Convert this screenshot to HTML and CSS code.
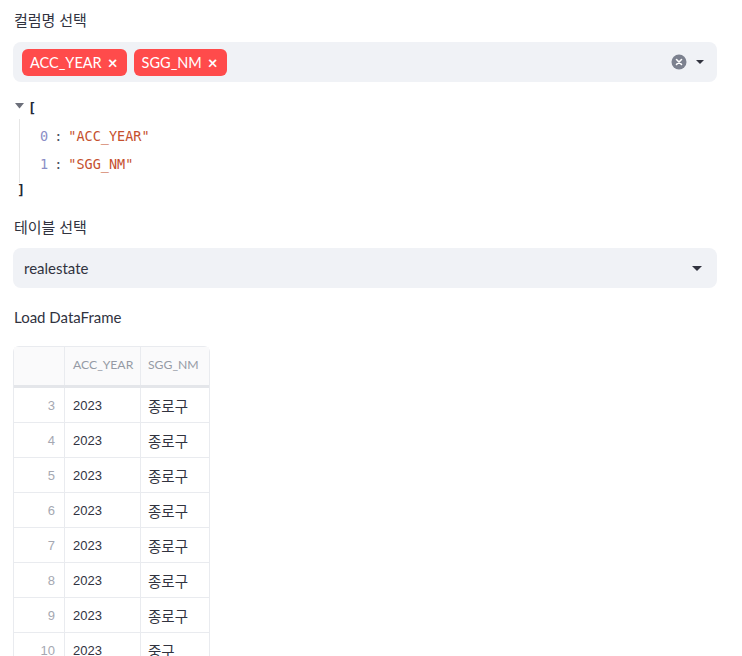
FILE: index.html
```html
<!DOCTYPE html>
<html>
<head>
<meta charset="utf-8">
<link rel="stylesheet" href="styles.css">
</head>
<body>
<div class="app">
  <div class="label">컬럼명 선택</div>
  <div class="select multi">
    <div class="tags">
      <span class="tag">ACC_YEAR <span class="x">×</span></span>
      <span class="tag">SGG_NM <span class="x">×</span></span>
    </div>
    <div class="controls">
      <svg class="clear" width="16" height="16" viewBox="0 0 16 16"><circle cx="8" cy="8" r="7.5" fill="#7c818f"/><path d="M5.5 5.5 L10.5 10.5 M10.5 5.5 L5.5 10.5" stroke="#fff" stroke-width="1.6" stroke-linecap="round"/></svg>
      <svg class="caret" width="10" height="6" viewBox="0 0 10 6"><path d="M1 1 L9 1 L5 5 Z" fill="#31333f"/></svg>
    </div>
  </div>

  <div class="json">
    <div class="jline"><svg class="tri" width="11" height="8" viewBox="0 0 11 8"><path d="M1 1 L10 1 L5.5 6.5 Z" fill="#6c6f7a"/></svg><span class="br">[</span></div>
    <div class="jbody">
      <div class="jitem"><span class="idx">0</span><span class="colon">:</span><span class="str">"ACC_YEAR"</span></div>
      <div class="jitem"><span class="idx">1</span><span class="colon">:</span><span class="str">"SGG_NM"</span></div>
    </div>
    <div class="jend">]</div>
  </div>

  <div class="label l2">테이블 선택</div>
  <div class="select single">
    <span class="value">realestate</span>
    <svg class="caret" width="12" height="7" viewBox="0 0 12 7"><path d="M1 1 L11 1 L6 6 Z" fill="#31333f"/></svg>
  </div>

  <div class="label l3">Load DataFrame</div>

  <div class="grid">
    <div class="row head">
      <div class="c idx"></div>
      <div class="c y">ACC_YEAR</div>
      <div class="c n">SGG_NM</div>
    </div>
    <div class="row"><div class="c idx">3</div><div class="c y">2023</div><div class="c n">종로구</div></div>
    <div class="row"><div class="c idx">4</div><div class="c y">2023</div><div class="c n">종로구</div></div>
    <div class="row"><div class="c idx">5</div><div class="c y">2023</div><div class="c n">종로구</div></div>
    <div class="row"><div class="c idx">6</div><div class="c y">2023</div><div class="c n">종로구</div></div>
    <div class="row"><div class="c idx">7</div><div class="c y">2023</div><div class="c n">종로구</div></div>
    <div class="row"><div class="c idx">8</div><div class="c y">2023</div><div class="c n">종로구</div></div>
    <div class="row"><div class="c idx">9</div><div class="c y">2023</div><div class="c n">종로구</div></div>
    <div class="row"><div class="c idx">10</div><div class="c y">2023</div><div class="c n">중구</div></div>
  </div>
</div>
</body>
</html>
```

FILE: styles.css
```css
html, body {
  margin: 0;
  padding: 0;
  background: #ffffff;
  overflow: hidden;
}
body {
  font-family: "Lato", "Noto Sans CJK KR", sans-serif;
  color: #31333f;
}
.app {
  padding: 0 25px 0 13px;
  width: 704px;
}
.label {
  font-size: 15px;
  line-height: 20px;
  padding: 10px 0 0 1px;
  height: 42px;
  box-sizing: border-box;
}
.select {
  background: #f0f2f6;
  border-radius: 8px;
  height: 40px;
  display: flex;
  align-items: center;
  justify-content: space-between;
  box-sizing: border-box;
}
.multi { padding: 0 12px 0 9px; }
.tags { display: flex; gap: 7px; }
.tag {
  background: #ff4b4b;
  color: #fff;
  border-radius: 6px;
  height: 27px;
  display: flex;
  align-items: center;
  padding: 0 9px 0 8px;
  font-size: 14.5px;
  gap: 6px;
}
.tag .x { font-size: 17px; line-height: 1; font-weight: bold; }
.controls { display: flex; align-items: center; gap: 8px; }
.json {
  font-family: "DejaVu Sans Mono", monospace;
  font-size: 13.5px;
  padding-top: 15px;
  box-sizing: border-box;
}
.jline { display: flex; align-items: center; height: 22px; }
.tri { margin: 0 3px 0 1px; position: relative; top: -2px; }
.br, .jend { color: #1f2937; font-weight: bold; }
.jbody {
  margin-left: 6px;
  border-left: 1px solid #e6e6e6;
  padding: 3px 0 5px 20px;
}
.jitem { height: 28px; line-height: 28px; display: flex; }
.jitem .idx { color: #8b8ec6; }
.colon { color: #4b5563; margin: 0 6px 0 6px; }
.str { color: #c5502e; }
.jend { padding-left: 4px; height: 18px; line-height: 14px; }
.l2 { padding-top: 16px; height: 47px; }
.single { padding: 0 14px 0 11px; font-size: 15px; }
.l3 { padding-top: 19px; height: 58px; }
.grid {
  width: 195px;
  border: 1px solid #e9ebef;
  border-bottom: none;
  border-radius: 6px 6px 0 0;
  font-family: "Liberation Sans", "Noto Sans CJK KR", sans-serif;
  font-size: 13px;
}
.row { display: flex; height: 35px; border-bottom: 1px solid #e9ebef; box-sizing: border-box; }
.row.head {
  height: 41px;
  background: #fafafb;
  color: #959aa5;
  border-bottom: 3px solid #e4e6ea;
  font-family: "Lato", sans-serif;
  font-size: 12.2px;
}
.c { display: flex; align-items: center; box-sizing: border-box; }
.c.idx { width: 51px; justify-content: flex-end; padding-right: 9px; color: #a5a8b2; border-right: 1px solid #e9ebef; }
.c.y { width: 76px; padding-left: 8px; border-right: 1px solid #e9ebef; }
.c.n { width: 66px; padding-left: 7px; }
.row:not(.head) .c.n { font-size: 14.5px; }
.row.head .c { padding-bottom: 4px; }
```
